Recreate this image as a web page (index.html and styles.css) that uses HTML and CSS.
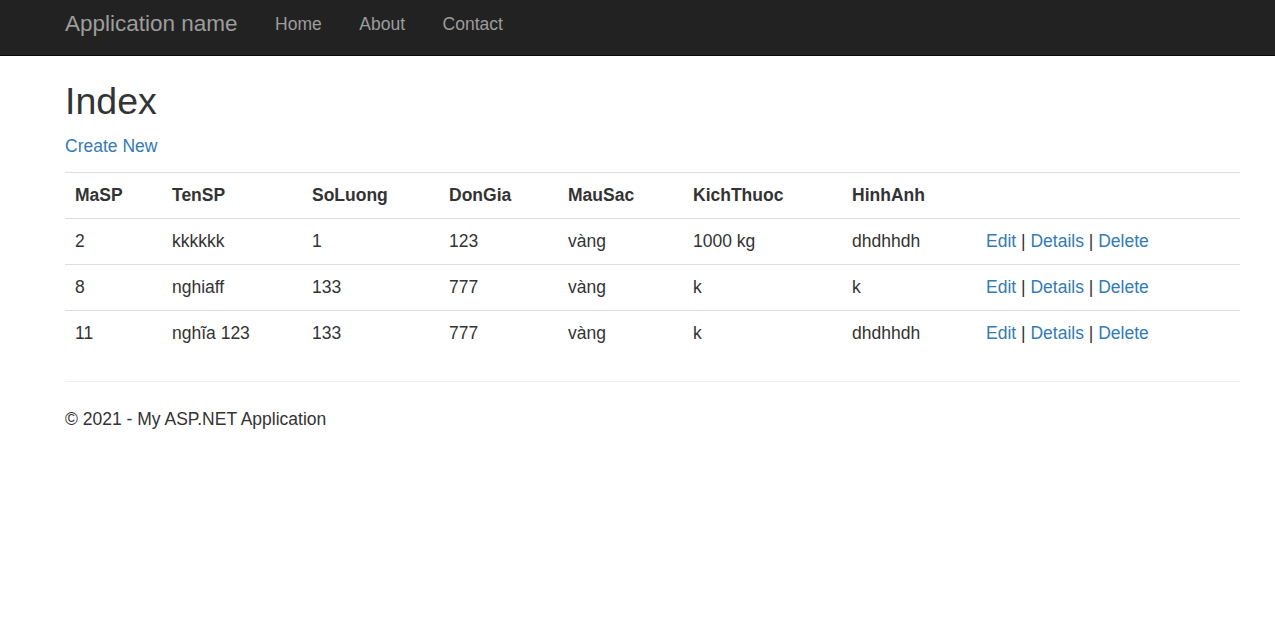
FILE: index.html
```html
<!DOCTYPE html>
<html>
<head>
<meta charset="utf-8">
<title>Index - My ASP.NET Application</title>
<link rel="stylesheet" href="styles.css">
</head>
<body>
<div class="navbar">
  <div class="container nav-inner">
    <a class="brand" href="#">Application name</a>
    <ul class="nav">
      <li><a href="#">Home</a></li>
      <li><a href="#">About</a></li>
      <li><a href="#">Contact</a></li>
    </ul>
  </div>
</div>
<div class="container body-content">
  <h2 class="title">Index</h2>
  <p class="create"><a href="#">Create New</a></p>
  <table class="table">
    <colgroup>
      <col class="c1"><col class="c2"><col class="c3"><col class="c4"><col class="c5"><col class="c6"><col class="c7"><col class="c8">
    </colgroup>
    <thead>
      <tr>
        <th>MaSP</th><th>TenSP</th><th>SoLuong</th><th>DonGia</th><th>MauSac</th><th>KichThuoc</th><th>HinhAnh</th><th></th>
      </tr>
    </thead>
    <tbody>
      <tr>
        <td>2</td><td>kkkkkk</td><td>1</td><td>123</td><td>vàng</td><td>1000 kg</td><td>dhdhhdh</td>
        <td><a href="#">Edit</a> | <a href="#">Details</a> | <a href="#">Delete</a></td>
      </tr>
      <tr>
        <td>8</td><td>nghiaff</td><td>133</td><td>777</td><td>vàng</td><td>k</td><td>k</td>
        <td><a href="#">Edit</a> | <a href="#">Details</a> | <a href="#">Delete</a></td>
      </tr>
      <tr>
        <td>11</td><td>nghĩa 123</td><td>133</td><td>777</td><td>vàng</td><td>k</td><td>dhdhhdh</td>
        <td><a href="#">Edit</a> | <a href="#">Details</a> | <a href="#">Delete</a></td>
      </tr>
    </tbody>
  </table>
  <hr class="rule">
  <footer class="footer">
    <p>© 2021 - My ASP.NET Application</p>
  </footer>
</div>
</body>
</html>
```
FILE: styles.css
```css
* { box-sizing: border-box; }

html, body {
  margin: 0;
  padding: 0;
}

body {
  font-family: "Liberation Sans", Arial, Helvetica, sans-serif;
  font-size: 17.5px;
  line-height: 25px;
  color: #333;
  background: #fff;
}

a {
  color: #337ab7;
  text-decoration: none;
}

.container {
  width: 1175px;
  margin-left: 65px;
}

.navbar {
  height: 56px;
  background: #222;
  border-bottom: 1px solid #080808;
}

.nav-inner {
  display: flex;
  align-items: flex-start;
  padding-top: 12px;
}

.brand {
  color: #9d9d9d;
  font-size: 22.5px;
  line-height: 24px;
  padding-right: 18.75px;
}

.nav {
  display: flex;
  list-style: none;
  margin: 0;
  padding: 0;
}

.nav a {
  display: block;
  color: #9d9d9d;
  padding: 0 18.75px;
  line-height: 25px;
}

.title {
  font-size: 37.5px;
  font-weight: 500;
  line-height: 41.25px;
  margin: 25px 0 11.5px;
}

.create {
  margin: 0 0 13.5px;
}

.table {
  width: 100%;
  border-collapse: collapse;
  border-spacing: 0;
  margin-bottom: 25px;
}

.c1 { width: 97px; }
.c2 { width: 140px; }
.c3 { width: 137px; }
.c4 { width: 119px; }
.c5 { width: 125px; }
.c6 { width: 159px; }
.c7 { width: 134px; }
.c8 { width: 264px; }

.table th,
.table td {
  padding: 10px;
  line-height: 25px;
  text-align: left;
  border-top: 1px solid #ddd;
  vertical-align: top;
}

.table th {
  font-weight: bold;
  vertical-align: bottom;
  border-bottom: 1px solid #ddd;
}

.table tbody tr:first-child td {
  border-top: 0;
}

.rule {
  margin: 0 0 25px;
  border: 0;
  border-top: 1px solid #eee;
  height: 0;
}

.footer p {
  margin: 0 0 12.5px;
}
```
